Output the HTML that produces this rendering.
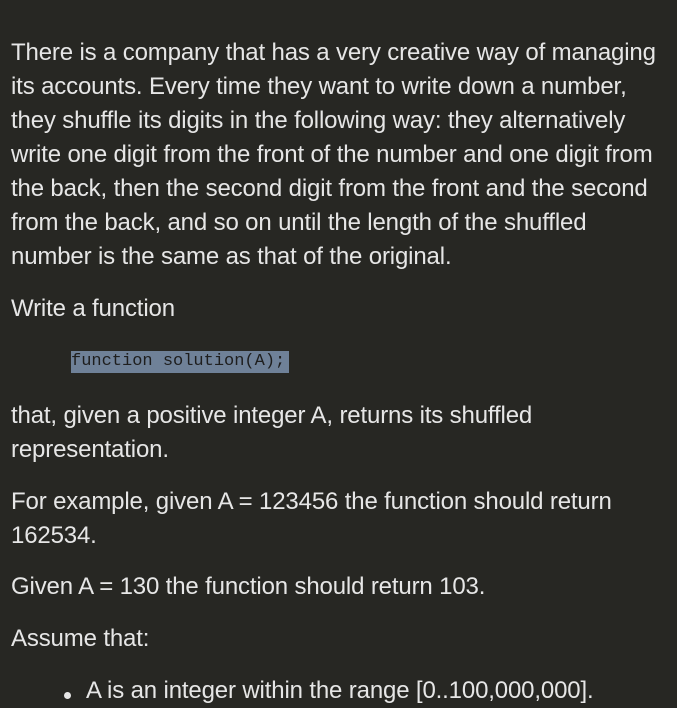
<!DOCTYPE html>
<html><head><meta charset="utf-8"><style>
html,body{margin:0;padding:0;background:#272723;width:677px;height:708px;overflow:hidden}
body{font-family:"Liberation Sans",sans-serif;color:#e6e6e6;font-size:24px;line-height:34px;letter-spacing:-0.15px}
.w{position:absolute;left:11px;top:36px;white-space:nowrap}
p{margin:0 0 17.6px 0}
.code{margin:0 0 18px 60px;height:38px;display:flex;align-items:center}
.code span{font-family:"Liberation Mono",monospace;font-size:17px;letter-spacing:0;background:#6f8198;color:#1e1e1e;line-height:22px;padding:0;display:inline-block;width:218px}
ul{margin:0;padding-left:53px}
li{list-style:none;position:relative;padding-left:22px}
li:before{content:"";position:absolute;left:0;top:18px;width:7px;height:7px;border-radius:50%;background:#e6e6e6}
</style></head><body><div class="w">
<p>There is a company that has a very creative way of managing<br>its accounts. Every time they want to write down a number,<br>they shuffle its digits in the following way: they alternatively<br>write one digit from the front of the number and one digit from<br>the back, then the second digit from the front and the second<br>from the back, and so on until the length of the shuffled<br>number is the same as that of the original.</p>
<p>Write a function</p>
<div class="code"><span>function solution(A);</span></div>
<p>that, given a positive integer A, returns its shuffled<br>representation.</p>
<p>For example, given A = 123456 the function should return<br>162534.</p>
<p>Given A = 130 the function should return 103.</p>
<p>Assume that:</p>
<ul><li>A is an integer within the range [0..100,000,000].</li></ul>
</div></body></html>
